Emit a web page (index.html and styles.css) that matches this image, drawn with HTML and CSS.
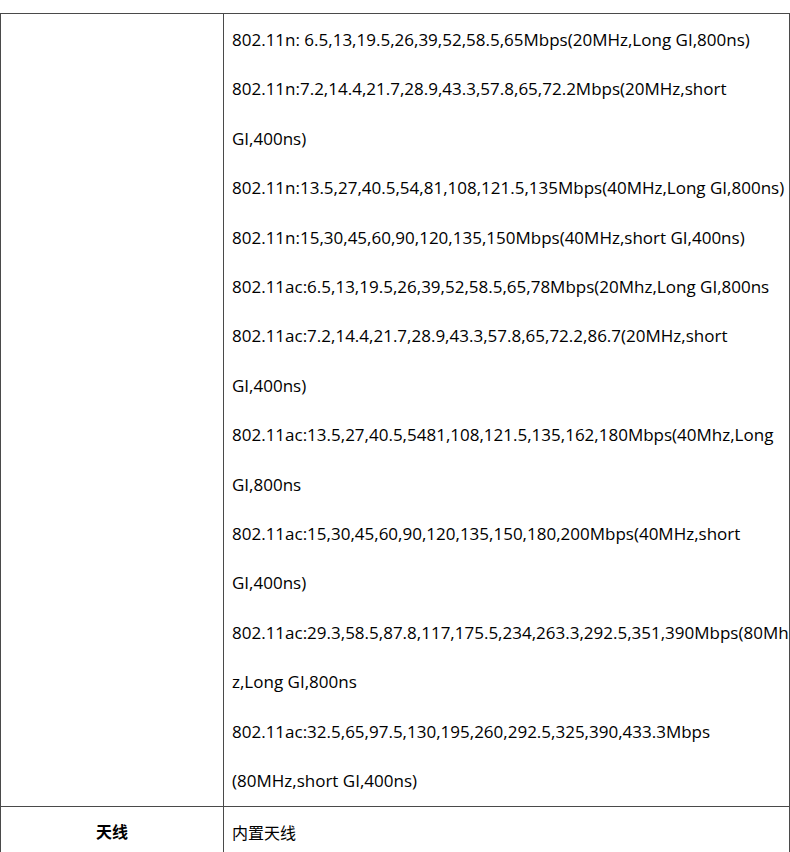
FILE: index.html
```html
<!DOCTYPE html>
<html lang="zh">
<head>
<meta charset="utf-8">
<title>规格</title>
<link rel="stylesheet" href="styles.css">
</head>
<body>
<table class="spec">
  <tr>
    <td class="label"></td>
    <td class="value">
      <p>802.11n: 6.5,13,19.5,26,39,52,58.5,65Mbps(20MHz,Long GI,800ns)</p>
      <p>802.11n:7.2,14.4,21.7,28.9,43.3,57.8,65,72.2Mbps(20MHz,short<br>GI,400ns)</p>
      <p>802.11n:13.5,27,40.5,54,81,108,121.5,135Mbps(40MHz,Long GI,800ns)</p>
      <p>802.11n:15,30,45,60,90,120,135,150Mbps(40MHz,short GI,400ns)</p>
      <p>802.11ac:6.5,13,19.5,26,39,52,58.5,65,78Mbps(20Mhz,Long GI,800ns</p>
      <p>802.11ac:7.2,14.4,21.7,28.9,43.3,57.8,65,72.2,86.7(20MHz,short<br>GI,400ns)</p>
      <p>802.11ac:13.5,27,40.5,5481,108,121.5,135,162,180Mbps(40Mhz,Long<br>GI,800ns</p>
      <p>802.11ac:15,30,45,60,90,120,135,150,180,200Mbps(40MHz,short<br>GI,400ns)</p>
      <p>802.11ac:29.3,58.5,87.8,117,175.5,234,263.3,292.5,351,390Mbps(80Mh<br>z,Long GI,800ns</p>
      <p>802.11ac:32.5,65,97.5,130,195,260,292.5,325,390,433.3Mbps<br>(80MHz,short GI,400ns)</p>
    </td>
  </tr>
  <tr>
    <td class="label"><strong>天线</strong></td>
    <td class="value"><p class="cjk">内置天线</p></td>
  </tr>
</table>
</body>
</html>
```
FILE: styles.css
```css
html, body {
  margin: 0;
  padding: 0;
  background: #fff;
}
body {
  padding-top: 13px;
  font-family: "Open Sans", "Noto Sans CJK SC", sans-serif;
  font-size: 17px;
  color: #000;
}
.spec {
  border-collapse: collapse;
  width: 790px;
}
.spec td {
  border: 1px solid #4a4a4a;
  vertical-align: top;
  padding: 0;
}
.label {
  width: 222px;
  text-align: center;
}
.spec td.label {
  vertical-align: middle;
}
.label strong {
  font-family: "Noto Sans CJK SC", sans-serif;
  font-size: 16px;
  font-weight: 700;
  display: block;
  line-height: 49.4px;
}
.value {
  padding: 1px 0 0 8px !important;
  white-space: nowrap;
  overflow: hidden;
}
.value p {
  margin: 0;
  line-height: 49.4px;
}
.value p.cjk {
  font-family: "Noto Sans CJK SC", sans-serif;
  font-size: 16px;
}
```
